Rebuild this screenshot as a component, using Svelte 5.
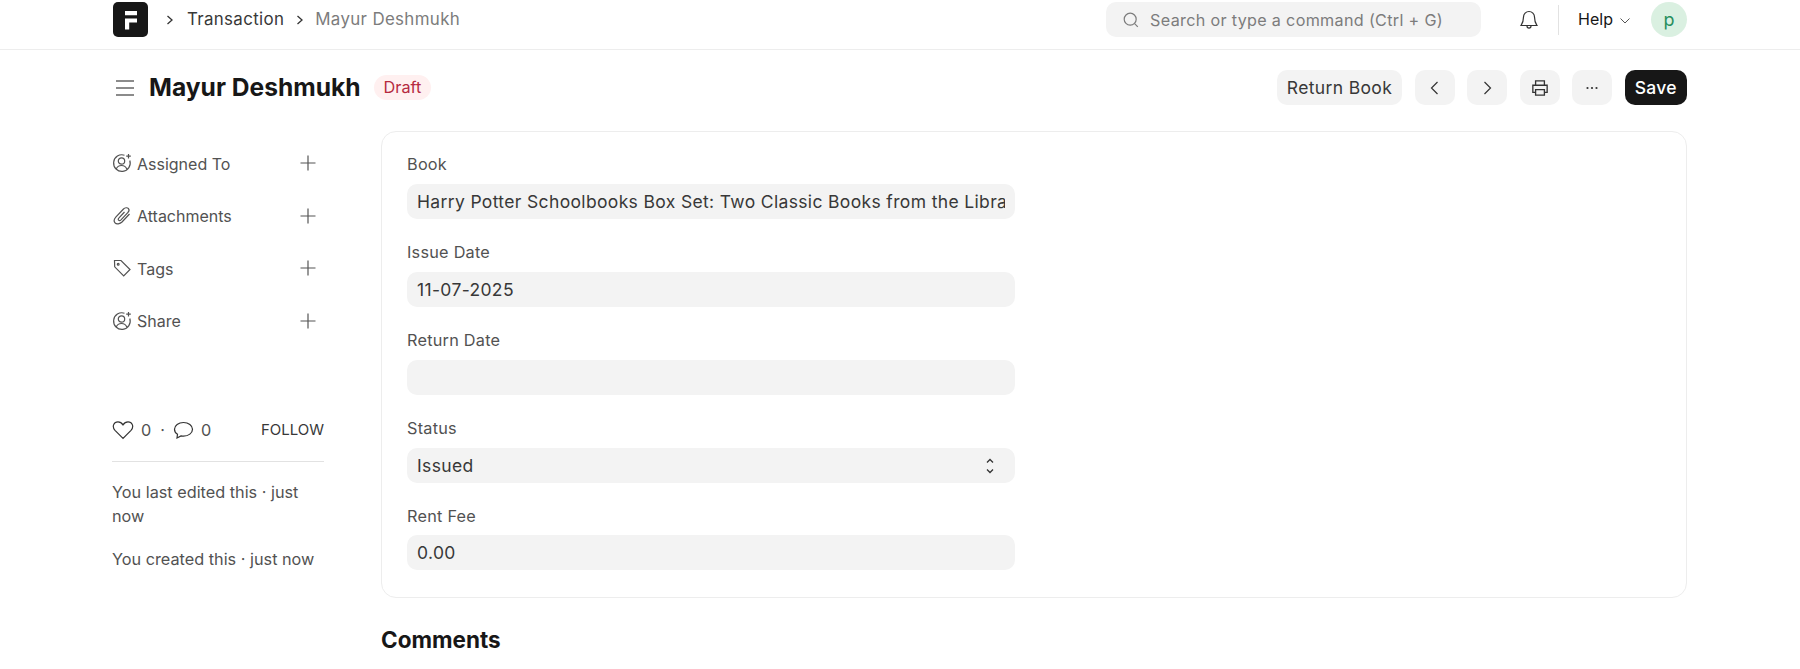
<script>
  const sidebarItems = [
    { label: 'Assigned To', icon: 'user' },
    { label: 'Attachments', icon: 'clip' },
    { label: 'Tags', icon: 'tag' },
    { label: 'Share', icon: 'user' }
  ];

  const fields = [
    { label: 'Book', value: 'Harry Potter Schoolbooks Box Set: Two Classic Books from the Library' },
    { label: 'Issue Date', value: '11-07-2025' },
    { label: 'Return Date', value: '' },
    { label: 'Status', value: 'Issued', select: true },
    { label: 'Rent Fee', value: '0.00' }
  ];
</script>

<header class="navbar">
  <div class="logo">
    <svg width="35" height="35" viewBox="0 0 35 35"><path d="M12 9h12v4.200H12zM12 16.500h12v4H16.200v7H12z" fill="#fff" /></svg>
  </div>
  <svg class="crumb-sep first" width="10" height="12" viewBox="0 0 10 12"><path d="M2.500 2l4.500 4-4.500 4" fill="none" stroke="#333" stroke-width="1.300" /></svg>
  <span class="crumb">Transaction</span>
  <svg class="crumb-sep" width="10" height="12" viewBox="0 0 10 12"><path d="M2.500 2l4.500 4-4.500 4" fill="none" stroke="#333" stroke-width="1.300" /></svg>
  <span class="crumb current">Mayur Deshmukh</span>

  <div class="search">
    <svg width="18" height="18" viewBox="0 0 18 18" fill="none" stroke="#7c7c7c" stroke-width="1.200"><circle cx="8.200" cy="8.200" r="6" /><path d="M12.600 12.600l3.200 3.200" /></svg>
    <span>Search or type a command (Ctrl + G)</span>
  </div>
  <svg class="bell" width="20" height="22" viewBox="0 0 20 22" fill="none" stroke="#333" stroke-width="1.200"><path d="M10 2.500a5.500 5.500 0 0 0-5.500 5.500c0 5-1.500 7-2.500 8.500h16c-1-1.500-2.500-3.500-2.500-8.500A5.500 5.500 0 0 0 10 2.500zM8 17c0 2.800 4 2.800 4 0" /></svg>
  <div class="nav-divider"></div>
  <span class="help">Help</span>
  <svg class="help-caret" width="12" height="8" viewBox="0 0 12 8"><path d="M1.500 1.500L6 6l4.500-4.500" fill="none" stroke="#555" stroke-width="1" /></svg>
  <div class="avatar">p</div>
</header>

<div class="page-head">
  <svg class="burger" width="18" height="16" viewBox="0 0 18 16" stroke="#666" stroke-width="1.300"><path d="M0 1h18M0 8h18M0 15h18" /></svg>
  <h1>Mayur Deshmukh</h1>
  <span class="badge">Draft</span>
  <div class="actions">
    <button class="btn">Return Book</button>
    <button class="btn icon" aria-label="Previous">
      <svg width="20" height="20" viewBox="0 0 20 20"><path d="M12.500 4l-6 6 6 6" fill="none" stroke="#333" stroke-width="1.200" /></svg>
    </button>
    <button class="btn icon" aria-label="Next">
      <svg width="20" height="20" viewBox="0 0 20 20"><path d="M7.500 4l6 6-6 6" fill="none" stroke="#333" stroke-width="1.200" /></svg>
    </button>
    <button class="btn icon" aria-label="Print">
      <svg width="22" height="22" viewBox="0 0 20 20" fill="none" stroke="#333" stroke-width="1.200"><path d="M6 7V3.500h8V7M6 14H3.500V7.500h13V14H14" /><path d="M6 11.500h8v5H6z" /></svg>
    </button>
    <button class="btn icon" aria-label="More">
      <svg width="20" height="20" viewBox="0 0 20 20" fill="#333"><circle cx="5.500" cy="10" r="1.100" /><circle cx="10" cy="10" r="1.100" /><circle cx="14.500" cy="10" r="1.100" /></svg>
    </button>
    <button class="btn primary">Save</button>
  </div>
</div>

<div class="layout">
  <aside class="sidebar">
    {#each sidebarItems as item}
      <div class="side-row">
        {#if item.icon === 'user'}
          <svg width="20" height="20" viewBox="0 0 20 20" fill="none" stroke="#525252" stroke-width="1.200"><path d="M12.500 2.200A8.300 8.300 0 1 0 17.800 7.500" /><circle cx="9.500" cy="8" r="3.200" /><path d="M4.200 16c1-2.500 2.900-3.500 5.300-3.500s4.300 1 5.300 3.500M16.500 1v4.500M14.200 3.200h4.600" /></svg>
        {:else if item.icon === 'clip'}
          <svg width="20" height="20" viewBox="0 0 20 20" fill="none" stroke="#525252" stroke-width="1.200"><path d="M17.500 8l-7.500 8c-2 2-5.500 2.500-7 .8s-.8-4 1-6L11.500 3c1.500-1.500 3.800-1.600 4.800-.6s.8 2.800-.5 4.200l-6.800 7.300c-.8.800-1.800.9-2.400.3s-.4-1.500.4-2.300L12.500 6" /></svg>
        {:else}
          <svg width="20" height="20" viewBox="0 0 20 20" fill="none" stroke="#525252" stroke-width="1.200"><path d="M2.500 2.500h6.500l9 9-6.300 6.300-9-9z" /><circle cx="6.200" cy="6.200" r=".9" /></svg>
        {/if}
        <span class="side-label">{item.label}</span>
        <svg class="plus" width="18" height="18" viewBox="0 0 18 18" stroke="#555" stroke-width="1.200"><path d="M9 1.500v15M1.500 9h15" /></svg>
      </div>
    {/each}

    <div class="stats">
      <svg width="22" height="20" viewBox="0 0 22 20" fill="none" stroke="#333" stroke-width="1.200"><path d="M11 18.300L3 10.300C-.5 6.500 2 1.800 6 1.800c2.200 0 3.800 1.200 5 3 1.200-1.800 2.800-3 5-3 4 0 6.500 4.700 3 8.500z" /></svg>
      <span class="count">0</span>
      <span class="dot">·</span>
      <svg class="bubble" width="21" height="20" viewBox="0 0 20 20" fill="none" stroke="#333" stroke-width="1.200"><path d="M10 2.500c-5 0-9 3-9 6.800 0 2.200 1.200 3.900 3 5L3.500 18l4-2.100c.8.100 1.600.2 2.500.2 5 0 9-3 9-6.800S15 2.500 10 2.500z" /></svg>
      <span class="count">0</span>
      <span class="follow">FOLLOW</span>
    </div>
    <p class="meta">You last edited this · just now</p>
    <p class="meta">You created this · just now</p>
  </aside>

  <main class="main">
    <section class="card">
      {#each fields as field}
        <div class="field">
          <div class="label">{field.label}</div>
          <div class="control">
            <div class="value">{field.value}</div>
            {#if field.select}
              <svg width="12" height="18" viewBox="0 0 12 18" fill="none" stroke="#333" stroke-width="1.300"><path d="M3 5.500L6 2.500l3 3M3 12.500l3 3 3-3" /></svg>
            {/if}
          </div>
        </div>
      {/each}
    </section>
    <h2>Comments</h2>
  </main>
</div>

<style>
  :global(body) {
    margin: 0;
    background: #fff;
    font-family: Inter, "Liberation Sans", sans-serif;
    color: #171717;
    overflow: hidden;
  }

  .navbar {
    display: flex;
    align-items: flex-start;
    height: 50px;
    padding: 2px 113px 0;
    box-sizing: border-box;
    border-bottom: 1px solid #ededed;
  }

  .navbar > * {
    flex: none;
  }

  .logo {
    width: 35px;
    height: 35px;
    background: #171717;
    border-radius: 5px;
  }

  .crumb-sep {
    align-self: flex-start;
    margin: 12px 10px 0 11px;
  }

  .crumb-sep.first {
    margin-left: 17px;
    margin-right: 12px;
  }

  .crumb {
    color: #383838;
    font-size: 16.900px;
    letter-spacing: .02em;
    line-height: 34px;
  }

  .crumb.current {
    color: #7c7c7c;
  }

  .search {
    display: flex;
    align-items: center;
    gap: 10px;
    width: 375px;
    height: 35px;
    margin-left: auto;
    padding-left: 16px;
    box-sizing: border-box;
    background: #f3f3f3;
    border-radius: 10px;
    color: #7c7c7c;
    font-size: 16.150px;
    letter-spacing: .02em;
  }

  .bell {
    margin-left: 38px;
    margin-top: 7px;
  }

  .nav-divider {
    width: 1px;
    height: 30px;
    margin: 3px 0 0 19px;
    background: #e2e2e2;
  }

  .help {
    margin-left: 19px;
    font-size: 16px;
    line-height: 35px;
    color: #171717;
  }

  .help-caret {
    margin-left: 6px;
    margin-top: 15px;
  }

  .avatar {
    display: flex;
    align-items: center;
    justify-content: center;
    width: 36px;
    height: 35px;
    margin-left: 20px;
    border-radius: 50%;
    background: #daf0e1;
    color: #278f5e;
    font-size: 18px;
  }

  .page-head {
    display: flex;
    align-items: center;
    height: 35px;
    padding: 20px 113px 0 116px;
  }

  h1 {
    margin: 0 0 0 15px;
    font-size: 24.600px;
    font-weight: 700;
    line-height: 35px;
    color: #171717;
  }

  .badge {
    margin-left: 13px;
    padding: 0 10px;
    height: 25px;
    line-height: 25px;
    border-radius: 13px;
    background: #fff0f0;
    color: #b52a3f;
    font-size: 16.250px;
  }

  .actions {
    display: flex;
    gap: 12.500px;
    margin-left: auto;
  }

  .btn {
    height: 35px;
    padding: 0 10px;
    border: 0;
    border-radius: 10px;
    background: #f3f3f3;
    color: #383838;
    font: inherit;
    font-size: 17.500px;
    letter-spacing: .02em;
  }

  .btn.icon {
    display: flex;
    align-items: center;
    justify-content: center;
    width: 40px;
    padding: 0;
  }

  .btn.primary {
    background: #171717;
    color: #fff;
    font-weight: 500;
  }

  .layout {
    display: flex;
    padding: 26px 113px 0 112px;
  }

  .sidebar {
    flex: none;
    width: 212px;
    margin-right: 57px;
    padding-top: 6px;
    color: #525252;
    font-size: 16px;
  }

  .side-row {
    display: flex;
    align-items: center;
    gap: 5px;
    height: 52.500px;
  }

  .side-label {
    padding-top: 1px;
  }

  .side-row .plus {
    margin-left: auto;
    margin-right: 7px;
  }

  .stats {
    display: flex;
    align-items: center;
    margin-top: 73px;
    padding-bottom: 21px;
    border-bottom: 1px solid #e2e2e2;
    line-height: 20px;
    font-size: 16.250px;
  }

  .count {
    margin-left: 7px;
  }

  .dot {
    margin-left: 9px;
  }

  .bubble {
    margin-left: 8px;
  }

  .follow {
    margin-left: auto;
    font-size: 15px;
    color: #383838;
  }

  .meta {
    margin: 18px 0 0;
    font-size: 16.250px;
    line-height: 24px;
  }

  .meta + .meta {
    margin-top: 19px;
  }

  .main {
    flex: 1;
    min-width: 0;
  }

  .card {
    height: 467px;
    padding: 24px 25px 0;
    box-sizing: border-box;
    border: 1px solid #ededed;
    border-radius: 15px;
  }

  .field {
    width: 608px;
    height: 88px;
  }

  .label {
    height: 28px;
    line-height: 16px;
    font-size: 16.250px;
    letter-spacing: .015em;
    color: #525252;
  }

  .field:last-child .label {
    height: 27px;
  }

  .control {
    display: flex;
    align-items: center;
    height: 35px;
    padding: 0 10px;
    background: #f3f3f3;
    border-radius: 10px;
    font-size: 17.500px;
    letter-spacing: .02em;
    color: #383838;
  }

  .control svg {
    margin-right: 9px;
  }

  .value {
    flex: 1;
    min-width: 0;
    overflow: hidden;
    white-space: nowrap;
  }

  h2 {
    margin: 28px 0 0;
    font-size: 22.500px;
    line-height: 28px;
    font-weight: 700;
    color: #171717;
  }
</style>
